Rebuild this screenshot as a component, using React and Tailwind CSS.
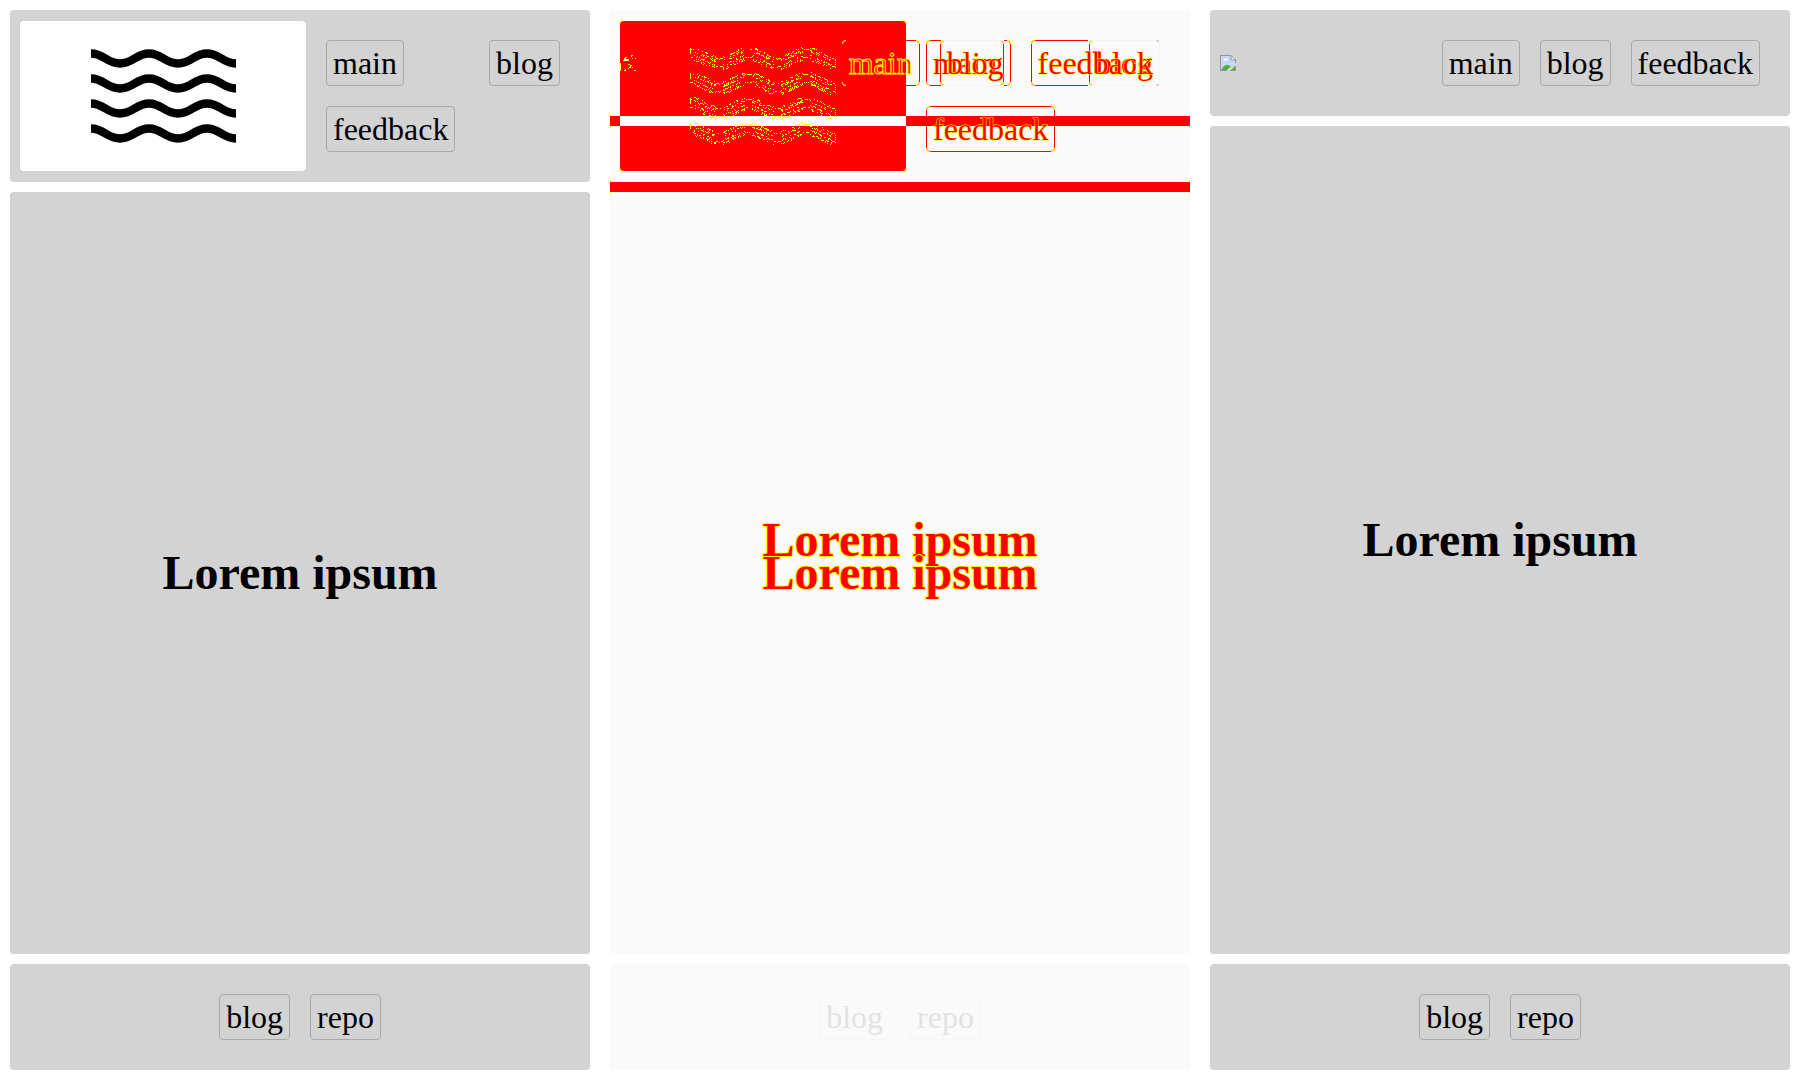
const BOX = "rounded border p-[6px] m-[10px] text-[32px] leading-[32px]";
const HEAD_GRID = "grid grid-cols-[286fr_274fr] items-center p-[10px]";

function WaveLogo() {
  const wave = (y) =>
    `M0 ${y}C13 ${y} 16 ${y + 10} 29 ${y + 10}S45 ${y} 58 ${y}S74 ${y + 10} 87 ${y + 10}S103 ${y} 116 ${y}S132 ${y + 10} 145 ${y + 10}`;
  return (
    <svg viewBox="0 0 145 94" className="h-[94px] w-[145px]" role="img" aria-label="Waves">
      {[4, 29, 54, 79].map((y) => (
        <path key={y} d={wave(y + 0.5)} fill="none" stroke="#000" strokeWidth="8.5" />
      ))}
    </svg>
  );
}

function BrokenImage() {
  return (
    <svg viewBox="0 0 16 16" className="h-4 w-4" role="img" aria-label="Missing image">
      <path d="M1 1H11V5H15V9L9 15H1Z" fill="#c6d9fa" />
      <path d="M3 5.5Q4 3 6 3.6Q8 3.4 8 5.5Z" fill="#fff" />
      <path d="M1 15Q5 9 8 10L11 11L7 15Z" fill="#4fad38" />
      <path d="M11 15L15 11V15Z" fill="#4fad38" />
      <path d="M6.500 16L16 7.500V10L10 16Z" fill="#d3d3d3" />
      <path d="M11 1L15 5H11Z" fill="#fff" />
      <path d="M7 15.500H.5V.5H11L15.500 5V8M11 .5V5H15.500M10 15.500H15.500V11" fill="none" stroke="#959595" />
    </svg>
  );
}

/* Scattered one-pixel marks along both edges of every wave. */
function edgeMarks() {
  let seed = 7;
  const rand = () => {
    seed = (seed * 16807) % 2147483647;
    return seed / 2147483647;
  };
  let d = "";
  const dot = (x, y) => {
    d += `M${x} ${Math.round(y)}h1v1h-1z`;
  };
  for (let row = 0; row < 4; row++) {
    for (let x = 0; x < 146; x++) {
      const phase = (x / 29) * Math.PI;
      const mid = 11.5 + row * 25 - 5 * Math.cos(phase);
      const slope = Math.abs(Math.sin(phase));
      for (const side of [-4, 4]) {
        if (slope < 0.4) {
          if (rand() < 0.65) dot(x, mid + side);
        } else {
          for (const k of [-2, -1, 1, 2, 3]) {
            if (rand() < 0.32) dot(x, mid + side + k);
          }
        }
      }
    }
    for (let k = 0; k < 6; k++) {
      dot(0, row * 25 + 2 + k);
      if (k % 2) dot(145, row * 25 + 13 + k);
    }
  }
  return d;
}

function WaveDiff() {
  return (
    <svg viewBox="0 0 146 100" className="h-[100px] w-[146px]" shapeRendering="crispEdges" aria-hidden="true">
      <path d={edgeMarks()} fill="#ff0" />
    </svg>
  );
}

function BrokenDiff() {
  return (
    <svg viewBox="0 0 16 16" className="h-4 w-4" shapeRendering="crispEdges" aria-hidden="true">
      <path d="M3 5h1v-1h1v-1h1v1h2v2h-5z M11 1h1v1h-1z" fill="#fff" />
      <path d="M0 8h1v8h-1z M5 2h2v1h-2z M4 3h1v1h-1z M8 4h1v2h-1z M11 0h2v1h-2z M12 3h1v1h-1z M15 3h1v1h-1z M8 9h2v1h-2z M10 10h2v1h-2z M10 11h1v1h-1z M9 12h2v1h-2z M8 13h1v1h-1z M12 12h1v1h-1z M4 15h2v1h-2z M5 14h1v1h-1z M14 15h2v1h-2z" fill="#ff0" />
    </svg>
  );
}

function NavLink({ children, className = "border-[#a9a9a9]" }) {
  return (
    <a href="#" className={`${BOX} ${className}`}>
      {children}
    </a>
  );
}

function Footer({ panel = "bg-[#d3d3d3]", link = "border-[#a9a9a9]" }) {
  return (
    <footer className={`flex justify-center rounded p-5 ${panel}`}>
      <NavLink className={link}>blog</NavLink>
      <NavLink className={link}>repo</NavLink>
    </footer>
  );
}

function Title({ className = "" }) {
  return <h1 className={`text-[48px] leading-[56px] font-bold ${className}`}>Lorem ipsum</h1>;
}

function Before() {
  return (
    <section className="flex flex-col gap-[10px] p-[10px]">
      <header className={`${HEAD_GRID} rounded bg-[#d3d3d3]`}>
        <div className="flex h-[150px] items-center justify-center rounded bg-white">
          <WaveLogo />
        </div>
        <nav className="flex flex-wrap justify-between p-[10px]">
          <NavLink>main</NavLink>
          <NavLink>blog</NavLink>
          <NavLink>feedback</NavLink>
        </nav>
      </header>
      <main className="flex grow items-center justify-center rounded bg-[#d3d3d3]">
        <Title />
      </main>
      <Footer />
    </section>
  );
}

function After() {
  return (
    <section className="flex flex-col gap-[10px] p-[10px]">
      <header className="flex items-center justify-between rounded bg-[#d3d3d3] p-[10px]">
        <BrokenImage />
        <nav className="flex p-[10px]">
          <NavLink>main</NavLink>
          <NavLink>blog</NavLink>
          <NavLink>feedback</NavLink>
        </nav>
      </header>
      <main className="flex grow items-center justify-center rounded bg-[#d3d3d3]">
        <Title />
      </main>
      <Footer />
    </section>
  );
}

const EDGE_OVER = "text-[#f00] [-webkit-text-stroke:1px_#ff0]";
const EDGE_THIN = "text-[#f00] [-webkit-text-stroke:1px_#ff0] [paint-order:stroke_fill]";
const EDGE_UNDER = "text-[#f00] [-webkit-text-stroke:2px_#ff0] [paint-order:stroke_fill]";

function Corners({ leftOnly }) {
  return (
    <>
      <span className="absolute -top-px -left-px h-[4px] w-[4px] rounded-tl border-t border-l border-[#ff0]" />
      <span className="absolute -bottom-px -left-px h-[4px] w-[4px] rounded-bl border-b border-l border-[#ff0]" />
      {!leftOnly && (
        <>
          <span className="absolute -top-px -right-px h-[4px] w-[4px] rounded-tr border-t border-r border-[#ff0]" />
          <span className="absolute -right-px -bottom-px h-[4px] w-[4px] rounded-br border-r border-b border-[#ff0]" />
        </>
      )}
    </>
  );
}

function DiffLink({ children, shared, leftOnly, edge = EDGE_THIN }) {
  return (
    <a
      href="#"
      className={`${BOX} relative border-y-[#f00] border-l-[#f00] ${leftOnly ? "border-r-[#f4f4f4]" : "border-r-[#f00]"} ${edge}`}
    >
      {shared && <span className={`absolute -inset-y-px border-[#f4f4f4] ${shared}`} />}
      <Corners leftOnly={leftOnly} />
      <span className="relative">{children}</span>
    </a>
  );
}

function RedBar({ children }) {
  return (
    <div className="relative grid h-[10px] grid-cols-[286fr_274fr] bg-[#f00] px-[10px]">
      {children}
      <span className="absolute -top-[2px] left-0 h-[14px] w-px border-y-2 border-[#ff0]" />
      <span className="absolute -top-[2px] right-0 h-[14px] w-px border-y-2 border-[#ff0]" />
    </div>
  );
}

function Diff() {
  return (
    <section className="grid p-[10px]">
      <div className="relative z-10 col-start-1 row-start-1 flex flex-col">
        <header className={HEAD_GRID}>
          <div className="h-[150px]" />
          <nav className="flex flex-wrap justify-between p-[10px]">
            <DiffLink>main</DiffLink>
            <DiffLink leftOnly shared="-right-px w-[70px] rounded-r border-y border-r">
              blog
            </DiffLink>
            <DiffLink>feedback</DiffLink>
          </nav>
        </header>
        <RedBar />
        <main className="mb-[10px] flex grow items-center justify-center">
          <Title className={EDGE_UNDER} />
        </main>
        <Footer panel="bg-[#fafafa]" link="border-[#f6f6f6] text-[#e3e3e3]" />
      </div>
      <div className="col-start-1 row-start-1 mb-[116px] rounded bg-[#fafafa]">
        <div className={`${HEAD_GRID} min-h-[172px]`}>
          <div className="relative h-[150px] rounded bg-[#f00]">
            <Corners />
          </div>
        </div>
      </div>
      <div className="relative col-start-1 row-start-1 flex flex-col">
        <header className="relative z-20 flex items-center justify-between p-[10px]">
          <BrokenDiff />
          <div className="absolute top-[36px] left-[80px]">
            <WaveDiff />
          </div>
          <nav className="flex p-[10px]">
            <DiffLink edge={EDGE_OVER}>main</DiffLink>
            <DiffLink shared="left-0 w-[63px] border-y">blog</DiffLink>
            <DiffLink leftOnly shared="-right-px w-[72px] rounded-r border-y border-r">
              feedback
            </DiffLink>
          </nav>
        </header>
        <RedBar>
          <div className="bg-white" />
        </RedBar>
        <main className="mb-[10px] flex grow items-center justify-center">
          <Title className={EDGE_UNDER} />
        </main>
        <div className="h-[106px]" />
      </div>
    </section>
  );
}

export default function App() {
  return (
    <div className="grid min-h-screen grid-cols-3 bg-white font-['Liberation_Serif',serif] text-black">
      <Before />
      <Diff />
      <After />
    </div>
  );
}
